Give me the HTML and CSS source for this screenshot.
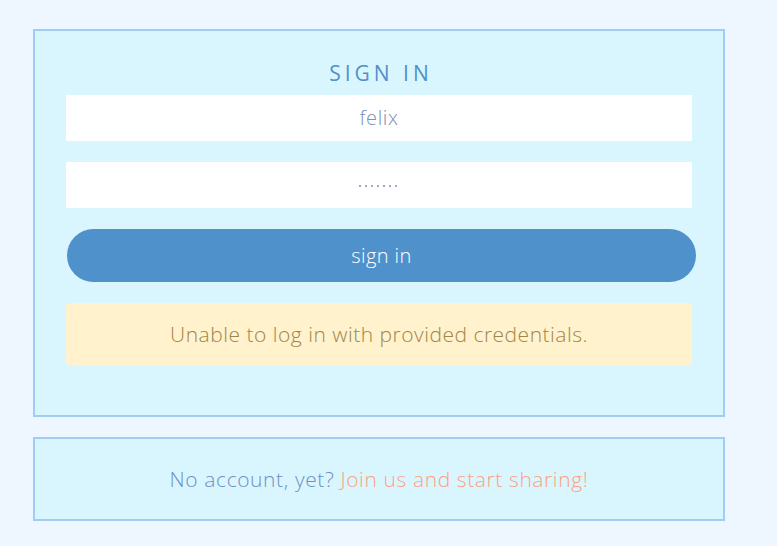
FILE: index.html
```html
<!DOCTYPE html>
<html>
<head>
<meta charset="utf-8">
<link rel="stylesheet" href="styles.css">
</head>
<body>
<main class="page">
  <section class="card signin">
    <h1 class="title">SIGN IN</h1>
    <div class="field">felix</div>
    <div class="field pw" aria-label="password"><span class="dot"></span><span class="dot"></span><span class="dot"></span><span class="dot"></span><span class="dot"></span><span class="dot"></span><span class="dot"></span></div>
    <button class="btn">sign in</button>
    <div class="alert">Unable to log in with provided credentials.</div>
  </section>
  <section class="card footer">
    <p class="note">No account, yet? <a class="join" href="#">Join us and start sharing!</a></p>
  </section>
</main>
</body>
</html>
```
FILE: styles.css
```css
* { box-sizing: border-box; }
html, body { margin: 0; padding: 0; }
body {
  background: #eef7ff;
  font-family: "Open Sans", "Noto Sans", sans-serif;
  font-weight: 300;
  width: 777px;
  height: 546px;
  overflow: hidden;
}
.page {
  padding: 29px 52px 0 33px;
  display: flex;
  flex-direction: column;
  gap: 20px;
}
.card {
  background: #d9f6fe;
  border: 2px solid #9fcdf6;
}
.signin {
  height: 388px;
  padding: 0 31px;
  display: flex;
  flex-direction: column;
}
.title {
  margin: 0;
  height: 64px;
  padding-top: 27px;
  padding-left: 4px;
  text-align: center;
  font-size: 21px;
  font-weight: 400;
  letter-spacing: 4px;
  color: #5190cb;
  line-height: 30px;
}
.field {
  background: #fff;
  height: 46px;
  line-height: 46px;
  text-align: center;
  font-size: 20px;
  letter-spacing: 0.6px;
  color: #7d8fb5;
  margin-bottom: 21px;
}
.pw {
  display: flex;
  justify-content: center;
  align-items: center;
  gap: 3.8px;
  padding-top: 2px;
  padding-right: 2px;
}
.dot {
  width: 2.2px;
  height: 2.2px;
  border-radius: 50%;
  background: #7d8fb5;
}
.btn {
  display: block;
  border: 0;
  height: 53px;
  width: calc(100% + 3px);
  margin-left: 1px;
  border-radius: 27px;
  background: #4f91ca;
  color: #fff;
  font-family: inherit;
  font-weight: 300;
  font-size: 20px;
  letter-spacing: 0.4px;
  margin-bottom: 21px;
}
.alert {
  background: #fff2cc;
  border-radius: 4px;
  height: 62px;
  line-height: 62px;
  text-align: center;
  font-size: 21px;
  letter-spacing: 0.5px;
  color: #a0864a;
}
.footer {
  height: 84px;
  display: flex;
  align-items: center;
  justify-content: center;
}
.note {
  margin: 0;
  font-size: 21px;
  letter-spacing: 0.6px;
  color: #6f90c6;
}
.join {
  color: #ff9f82;
  text-decoration: none;
}
```
